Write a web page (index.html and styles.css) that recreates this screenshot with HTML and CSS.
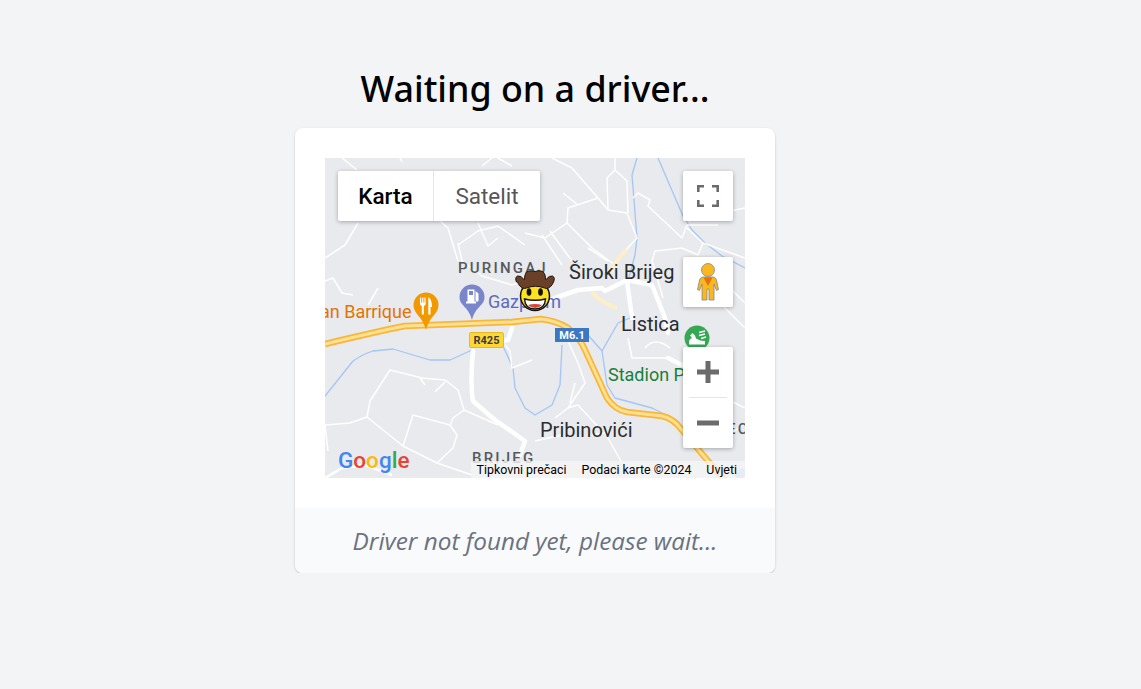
FILE: index.html
```html
<!DOCTYPE html>
<html lang="en">
<head>
  <meta charset="UTF-8" />
  <title>Waiting on a driver</title>
  <meta name="viewport" content="width=device-width, initial-scale=1" />
  <link rel="stylesheet" href="styles.css">
</head>
<body>
  <main class="page">
    <h1 class="title">Waiting on a driver...</h1>
    <section class="card">
      <div class="card-body">
        <div class="map">
          <svg class="map-canvas" width="420" height="320" viewBox="0 0 420 320">
            <rect width="420" height="320" fill="#e8eaed"/>
            <g class="river">
              <path d="M0 238L28 203Q38 196 48 193L68 191L105 202H125L147 192"/>
              <path d="M178 188L188 210L190 230L200 250L210 257L227 247L235 227L237 187"/>
              <path d="M312 0L307 17L312 80L310 97L303 123L305 160L293 165L277 193L282 227L290 240L327 250L353 263L362 280"/>
              <path d="M263 177L277 193"/>
              <path d="M333 0L358 58L367 72L380 85L397 98L420 110"/>
              <path class="river-wide" d="M412 320L420 312"/>
            </g>
            <g class="road">
              <path d="M17 0L32 12"/>
              <path d="M75 0L77 4"/>
              <path d="M33 65L20 87L0 100"/>
              <path d="M0 123L8 120L17 135L28 137"/>
              <path d="M53 130L43 147"/>
              <path d="M115 63L123 70L133 103"/>
              <path d="M133 87L153 73L173 68L200 87"/>
              <path d="M153 65L163 88L173 80"/>
              <path d="M133 85L137 103L157 118L187 127L200 123"/>
              <path d="M157 8L167 0M173 0L187 8"/>
              <path d="M227 0L247 10L273 40L283 52L302 55L312 80L300 93"/>
              <path d="M290 0V12L282 20L283 52"/>
              <path d="M290 12L302 23L303 55"/>
              <path d="M273 40L243 50L242 65L220 80L200 75"/>
              <path d="M242 65L267 90L290 107"/>
              <path d="M217 77L237 107M225 73L247 103"/>
              <path d="M238 35L253 47M263 90L283 103"/>
              <path d="M308 40L313 35L325 42L323 48L357 80L362 67L393 67"/>
              <path d="M362 70L378 85L373 97L357 90L330 93L327 103L338 140"/>
              <path d="M378 85L420 100M395 55L420 50"/>
              <path d="M395 120L420 145M380 130L420 170"/>
              <path d="M0 267L25 265L42 259L45 243L65 212L97 220L120 222L133 232L139 252L128 260L125 267L88 257L78 288L42 259"/>
              <path d="M78 288L112 305L147 317"/>
              <path d="M125 267L132 277L128 290L112 305"/>
              <path d="M139 252L173 267"/>
              <path d="M0 267L3 293"/>
              <path d="M95 220L100 227M110 234L120 224"/>
              <path d="M180 187L185 193L187 210L207 202"/>
              <path d="M243 183L253 205L260 225L243 250L253 247L277 273"/>
              <path d="M243 250L230 260M210 283L237 277"/>
              <path d="M267 277L280 275L300 310"/>
              <path d="M262 203L268 210M250 225L245 245"/>
              <path d="M303 180L307 200L343 200"/>
              <path d="M320 190Q330 178 345 190"/>
              <path d="M400 240L420 250M400 280L420 265"/>
            </g>
            <path class="road-wide" d="M0 320L17 310L40 307L67 317"/>
            <g class="road-main">
              <path d="M205 150L230 140L253 132L277 130L280 133L302 122L327 127L340 160L343 175"/>
              <path d="M302 123L307 160"/>
              <path d="M343 200L357 207L372 205"/>
              <path d="M148 193Q145 225 148 243L170 262L200 283L195 297"/>
              <path d="M187 170L183 182L160 186"/>
            </g>
            <path class="road-local" d="M285 115Q292 100 302 92M267 134Q276 145 292 150"/>
            <g class="highway">
              <path class="highway-edge" d="M0 186Q50 174 80 168L187 164L216 161Q232 163 243 170Q255 180 260 192L282 240Q290 252 302 254L337 258Q348 260 357 272L383 303L400 322"/>
              <path class="highway-core" d="M0 186Q50 174 80 168L187 164L216 161Q232 163 243 170Q255 180 260 192L282 240Q290 252 302 254L337 258Q348 260 357 272L383 303L400 322"/>
            </g>

            <text class="label-hood" x="133" y="115">PURINGAJ</text>
            <text class="label-hood" x="147" y="305">BRIJEG</text>
            <text class="label-town" x="244" y="121">Široki Brijeg</text>
            <text class="label-town" x="296" y="173">Listica</text>
            <text class="label-town" x="215" y="279">Pribinovići</text>
            <text class="label-orange" x="-5" y="160">an Barrique</text>
            <text class="label-blue" x="163" y="150">Gazprom</text>
            <text class="label-green" x="283" y="223">Stadion Pecara</text>
            <text class="label-hood" x="402" y="276">EC</text>

            <!-- pins -->
            <path fill="#f29900" d="M101 134.500c-7 0-12.500 5.500-12.500 12.500 0 9 9 11 12.500 25 3.500-14 12.500-16 12.500-25 0-7-5.500-12.500-12.500-12.500z"/>
            <path fill="#fff" d="M95 139.500h1.200v5h1v-5h1.200v5h1v-5h1.200v7l-1.800 1.800v8.200h-2v-8.200L95 146.500zM104 139.500q3 2.500 3 9.500h-1.500v7.500h-2.200V139.500z"/>
            <path fill="#7986cb" d="M147 126.500c-7 0-12.500 5.500-12.500 12.500 0 9 9 9 12.500 23 3.500-14 12.500-14 12.500-23 0-7-5.500-12.500-12.500-12.500z"/>
            <path fill="#fff" d="M142.500 131.500h7v12h1.500v2h-10v-2h1.500zM144 133v4h4v-4zM150.500 133l3 2.500v7.500q-2 1.500-3-.5z"/>
            <circle cx="372" cy="180" r="12.500" fill="#34a853"/>
            <path fill="#fff" d="M364 186q-.5-5 3-6l-2-2.500 2.500-2.500 2.500 2.500 1 3q4 2.500 9 2.500v3.500h-16z"/>
            <path class="shower" d="M374 174.500l6-1.500M374 177.500l6-1.500M376 180.500l5-1.500"/>

            <!-- shield badges -->
            <rect x="144.500" y="174.500" width="34" height="15" rx="1.500" fill="#fdd835" stroke="#e8b923"/>
            <text class="label-road" x="161.500" y="186" fill="#3c3c3c">R425</text>
            <rect x="230" y="170" width="34" height="14" fill="#3b78c3"/>
            <text class="label-road" x="247" y="181" fill="#fff">M6.1</text>

            <!-- driver marker -->
            <g>
              <circle cx="210" cy="138" r="14.500" fill="#fde21f" stroke="#111" stroke-width="1.500"/>
              <path fill="#6a4029" stroke="#21140c" stroke-width="1" d="M191.500 124q-2-4.500 1-6 3.500-.5 6 3l1 .5q0-8 4.500-8.500 3-.5 6 .5 3-1 6-.5 4.500.5 4.500 8.500l1-.5q2.500-3.500 6-3 3 1.500 1 6-2 5.500-7 6.500l-2-.5q-9-3.500-18 0l-2 .5q-5-1-7-6.500z"/>
              <ellipse cx="204" cy="134" rx="2.400" ry="3.800" fill="#111"/>
              <ellipse cx="215.500" cy="134" rx="2.400" ry="3.800" fill="#111"/>
              <path fill="#fff" stroke="#111" stroke-width="1.400" d="M199.500 141q10.500 2.500 21 0q-.5 10-10.500 10t-10.500-10z"/>
              <path fill="#d8453c" d="M203 147q7-2 14 0q-3 3-7 3t-7-3z"/>
            </g>

            <!-- google logo -->
            <text class="logo" x="13" y="310"><tspan fill="#4285f4">G</tspan><tspan fill="#ea4335">o</tspan><tspan fill="#fbbc04">o</tspan><tspan fill="#4285f4">g</tspan><tspan fill="#34a853">l</tspan><tspan fill="#ea4335">e</tspan></text>
          </svg>

          <div class="type-switch">
            <button class="type-btn type-btn-on">Karta</button>
            <button class="type-btn">Satelit</button>
          </div>

          <button class="ctrl ctrl-full" aria-label="Full screen">
            <svg width="22" height="22" viewBox="0 0 22 22"><path fill="none" stroke="#6b6b6b" stroke-width="2.600" d="M1.300 7V1.300H7M15 1.300h5.700V7M20.700 15v5.700H15M7 20.700H1.300V15"/></svg>
          </button>

          <button class="ctrl ctrl-peg" aria-label="Street View">
            <svg width="24" height="38" viewBox="0 0 24 38"><path fill="#f9b81f" stroke="#80868b" stroke-width=".8" d="M7 14h10q3 .5 3.500 3l2 9.500-2 1L18 21v16h-5V26h-2v11H6V21l-2.500 6.500-2-1 2-9.500Q4 14.500 7 14z"/><circle cx="12" cy="7" r="6.500" fill="#f9b81f" stroke="#80868b" stroke-width=".8"/><path fill="#e8710a" d="M7.500 14.500h9L12 23z"/></svg>
          </button>

          <div class="zoom">
            <button class="zoom-btn" aria-label="Zoom in"><svg width="22" height="22" viewBox="0 0 22 22"><path fill="#6b6b6b" d="M8.500 0h5v8.500H22v5h-8.500V22h-5v-8.500H0v-5h8.500z"/></svg></button>
            <div class="zoom-sep"></div>
            <button class="zoom-btn" aria-label="Zoom out"><svg width="22" height="22" viewBox="0 0 22 22"><path fill="#6b6b6b" d="M0 8.500h22v5H0z"/></svg></button>
          </div>

          <div class="attrib">
            <span>Tipkovni prečaci</span>
            <span>Podaci karte ©2024</span>
            <span>Uvjeti</span>
          </div>
        </div>
      </div>
      <div class="card-foot">Driver not found yet, please wait...</div>
    </section>
  </main>
</body>
</html>
```

FILE: styles.css
```css
body{
  margin:0;
  background:#f3f4f6;
  font-family:"Open Sans","Noto Sans",sans-serif;
}
.page{
  display:flex;flex-direction:column;align-items:center;
  width:1070px;
  padding-top:68px;
}
.title{
  margin:0 0 20px;
  font-family:"Noto Sans","Open Sans",sans-serif;
  font-size:35.800px;line-height:40px;font-weight:500;color:#000;
}
.card{
  width:480px;
  background:#fff;border-radius:8px;overflow:hidden;
  box-shadow:0 1px 3px rgba(0,0,0,.12),0 1px 2px rgba(0,0,0,.08);
}
.card-body{padding:30px;}
.card-foot{
  height:65px;
  display:flex;align-items:center;justify-content:center;
  background:#f9fafb;color:#6b7280;
  font-size:24.300px;font-style:italic;
}

/* map */
.map{
  position:relative;width:420px;height:320px;overflow:hidden;
  font-family:Roboto,sans-serif;
}
.map-canvas{display:block;}
.river{fill:none;stroke:#a3c6f5;stroke-width:1.300;stroke-linejoin:round;}
.river-wide{stroke-width:8;}
.road{fill:none;stroke:#fff;stroke-width:1.500;stroke-linejoin:round;}
.road-wide{fill:none;stroke:#fff;stroke-width:2.500;}
.road-main{fill:none;stroke:#fff;stroke-width:4.500;stroke-linejoin:round;stroke-linecap:round;}
.road-local{fill:none;stroke:#fdf0c8;stroke-width:4;}
.highway-edge{fill:none;stroke:#f8b63c;stroke-width:6.500;stroke-linejoin:round;}
.highway-core{fill:none;stroke:#fee08f;stroke-width:3;stroke-linejoin:round;}
.shower{fill:none;stroke:#fff;stroke-width:1.500;}

.label-town{font:400 20px Roboto,sans-serif;fill:#2b2d30;}
.label-hood{font:500 15px Roboto,sans-serif;letter-spacing:2.200px;fill:#55595e;}
.label-orange{font:400 18px Roboto,sans-serif;fill:#e37400;}
.label-blue{font:400 18px Roboto,sans-serif;fill:#5c6bc0;}
.label-green{font:400 18px Roboto,sans-serif;fill:#188038;}
.label-road{font:700 11px Roboto,sans-serif;text-anchor:middle;}
.logo{font:500 22.500px Roboto,sans-serif;}

.type-switch{
  position:absolute;left:13px;top:13px;
  display:flex;
  background:#fff;border-radius:2px;
  box-shadow:0 1px 4px rgba(0,0,0,.3);
}
.type-btn{
  height:50px;width:106px;padding:0;
  border:none;background:none;
  font:400 22.500px Roboto,sans-serif;color:#565656;
}
.type-btn-on{width:96px;font-weight:500;color:#000;border-right:1px solid #e6e6e6;}

.ctrl,.zoom{
  position:absolute;left:358px;width:50px;
  background:#fff;border:none;border-radius:2px;padding:0;
  box-shadow:0 1px 4px rgba(0,0,0,.3);
}
.ctrl{height:50px;display:flex;align-items:center;justify-content:center;}
.ctrl-full{top:13px;}
.ctrl-peg{top:99px;}
.zoom{top:189px;height:101px;display:flex;flex-direction:column;align-items:center;}
.zoom-btn{
  width:50px;height:50px;padding:0;border:none;background:none;
  display:flex;align-items:center;justify-content:center;
}
.zoom-sep{width:38px;height:1px;background:#e6e6e6;flex:none;}

.attrib{
  position:absolute;right:0;bottom:0;height:17px;
  display:flex;align-items:center;gap:15px;
  padding:0 8px 0 6px;
  background:rgba(245,245,245,.8);
  font-size:12.400px;color:#000;white-space:nowrap;
}
```
